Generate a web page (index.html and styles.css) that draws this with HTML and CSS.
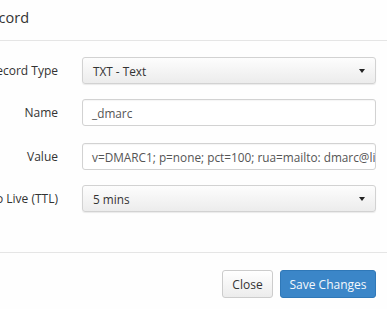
FILE: index.html
```html
<!DOCTYPE html>
<html>
<head>
<meta charset="utf-8">
<link rel="stylesheet" href="styles.css">
</head>
<body>
<div class="modal">
  <div class="modal-header">
    <h4 class="title">Edit Record</h4>
  </div>
  <div class="modal-body">
    <div class="row">
      <label class="lbl">Record Type</label>
      <div class="select"><span>TXT - Text</span><span class="caret"></span></div>
    </div>
    <div class="row">
      <label class="lbl">Name</label>
      <div class="input">_dmarc</div>
    </div>
    <div class="row">
      <label class="lbl">Value</label>
      <div class="input">v=DMARC1; p=none; pct=100; rua=mailto: dmarc@lists.example.com</div>
    </div>
    <div class="row">
      <label class="lbl">Time to Live (TTL)</label>
      <div class="select"><span>5 mins</span><span class="caret"></span></div>
    </div>
  </div>
  <div class="modal-footer">
    <button class="btn btn-default">Close</button>
    <button class="btn btn-primary">Save Changes</button>
  </div>
</div>
</body>
</html>
```
FILE: styles.css
```css
html, body {
  margin: 0;
  padding: 0;
  background: #fefefe;
  overflow: hidden;
}
body {
  font-family: "Open Sans", "Liberation Sans", sans-serif;
  font-size: 12px;
  color: #333;
  width: 387px;
  height: 309px;
}
.modal {
  width: 387px;
}
.modal-header {
  height: 40px;
  border-bottom: 1px solid #e5e5e5;
  box-sizing: content-box;
  overflow: hidden;
}
.title {
  margin: 0 0 0 -48px;
  padding-top: 8px;
  font-size: 14.5px;
  font-weight: normal;
  line-height: 20px;
  white-space: nowrap;
  color: #333;
}
.modal-body {
  padding: 16px 11px 0 0;
  height: 195px;
  border-bottom: 1px solid #e5e5e5;
}
.row {
  display: grid;
  grid-template-columns: 58px 1fr;
  column-gap: 24px;
  align-items: center;
  margin-bottom: 15px;
}
.row:nth-child(2) { margin-bottom: 17px; }
.lbl {
  display: flex;
  justify-content: flex-end;
  white-space: nowrap;
  color: #333;
}
.select, .input {
  height: 27px;
  box-sizing: border-box;
  border: 1px solid #d2d2d2;
  border-radius: 3px;
  padding: 0 9px;
  display: flex;
  align-items: center;
  white-space: nowrap;
  overflow: hidden;
  color: #555;
  font-size: 11.8px;
}
.select {
  background: linear-gradient(#fdfdfd, #ececec);
  box-shadow: 0 1px 1px rgba(0,0,0,0.08);
  justify-content: space-between;
  color: #333;
  padding-left: 10px;
  padding-right: 10px;
}
.input {
  background: #fff;
  box-shadow: inset 0 1px 1px rgba(0,0,0,0.04);
}
.caret {
  width: 0;
  height: 0;
  border-left: 3px solid transparent;
  border-right: 3px solid transparent;
  border-top: 4px solid #222;
}
.modal-footer {
  display: flex;
  justify-content: flex-end;
  gap: 7px;
  padding: 17px 11px 0 0;
}
.btn {
  font-family: inherit;
  font-size: 12px;
  height: 28px;
  border-radius: 3px;
  padding: 0;
  white-space: nowrap;
  cursor: pointer;
}
.btn-default {
  background: linear-gradient(#fff, #ececec);
  border: 1px solid #ccc;
  color: #333;
  width: 51px;
}
.btn-primary {
  background: #3b86c8;
  border: 1px solid #2f78b8;
  color: #f4f8fc;
  width: 96px;
}
```
